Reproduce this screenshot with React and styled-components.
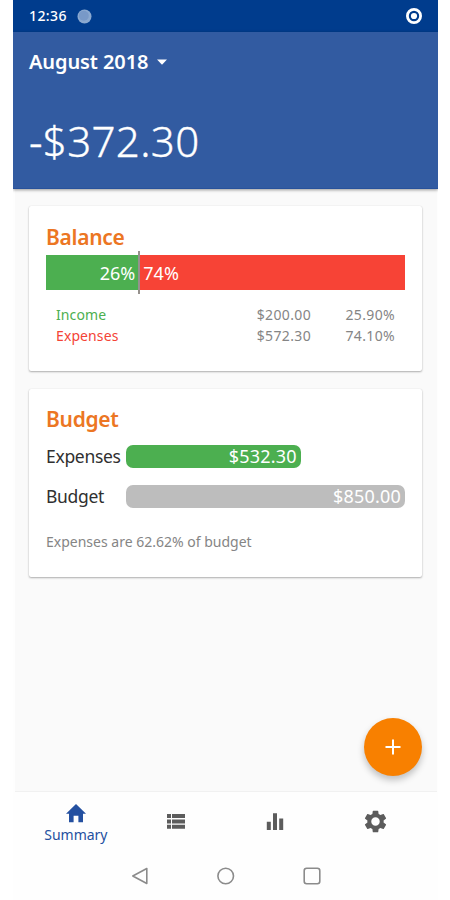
import React from "react";
import styled, { createGlobalStyle } from "styled-components";

const GlobalStyle = createGlobalStyle`
  * { box-sizing: border-box; }
  body { margin: 0; background: #fff; font-family: "Noto Sans", "Open Sans", sans-serif; }
`;

const Screen = styled.div`
  position: relative;
  width: 425px;
  height: 900px;
  margin-left: 13px;
  display: flex;
  flex-direction: column;
  overflow: hidden;
  background: #fefefe;
`;

const StatusBar = styled.div`
  flex: none;
  height: 32px;
  padding: 0 15px 0 16px;
  display: flex;
  align-items: center;
  background: #003c8d;
`;

const Clock = styled.span`
  width: 48px;
  color: #fff;
  font-size: 14px;
  font-weight: 500;
  line-height: 32px;
  letter-spacing: 0.4px;
`;

const StatusTarget = styled.svg`
  margin-left: auto;
`;

const Header = styled.header`
  flex: none;
  height: 157px;
  padding: 16px 15px 0 16px;
  background: #325ba1;
  border-bottom: 1px solid #28529b;
  box-shadow: 0 1px 3px rgba(0, 0, 0, 0.4);
  color: #fff;
  z-index: 1;
`;

const MonthPicker = styled.div`
  height: 28px;
  display: flex;
  align-items: center;
  gap: 8px;
  font-size: 20px;
  font-weight: 600;
  line-height: 28px;
  letter-spacing: -0.1px;
`;

const Total = styled.div`
  margin-top: 35px;
  font-size: 42px;
  font-weight: 300;
  line-height: 60px;
  letter-spacing: 0.35px;
  -webkit-text-stroke: 0.35px #fff;
`;

const Content = styled.main`
  height: 603px;
  flex: none;
  margin: 0 1px 0 2px;
  padding: 17px 15px 0 14px;
  background: #fafafa;
  border-bottom: 1px solid #f1f1f1;
  display: flex;
  flex-direction: column;
  gap: 18px;
`;

const Card = styled.section`
  height: ${(p) => p.$height}px;
  padding: ${(p) => p.$top}px 17px 0;
  border-radius: 2px;
  background: #fff;
  box-shadow: 0 1px 2px rgba(0, 0, 0, 0.3), 0 0 1px rgba(0, 0, 0, 0.12);
`;

const CardTitle = styled.h2`
  margin: 0;
  color: #ec7623;
  font-size: 21px;
  font-weight: 600;
  line-height: 30px;
  letter-spacing: -0.3px;
`;

const SplitBar = styled.div`
  position: relative;
  height: 35px;
  margin-top: 3px;
  display: flex;
  color: #fff;
  font-size: 18px;
  line-height: 36px;
`;

const Share = styled.div`
  width: ${(p) => p.$width};
  padding: 0 4px;
  background: ${(p) => p.$color};
  text-align: ${(p) => p.$align};
`;

const Divider = styled.div`
  position: absolute;
  left: 92px;
  top: -4px;
  width: 1.5px;
  height: 43px;
  background: #96918d;
`;

const Table = styled.div`
  margin: 15px 10px 0;
  display: grid;
  grid-template-columns: 1fr 84px 84px;
  font-size: 14px;
  line-height: 20.5px;
  color: #858585;
`;

const Label = styled.span`
  color: ${(p) => p.$color};
  letter-spacing: 0.1px;
`;

const Figure = styled.span`
  text-align: right;
  letter-spacing: 0.35px;
`;

const BudgetRow = styled.div`
  height: 24px;
  margin-top: ${(p) => p.$top}px;
  display: grid;
  grid-template-columns: 80px 1fr;
  align-items: start;
  color: #303030;
  font-size: 17.5px;
`;

const BudgetLabel = styled.span`
  line-height: 22px;
  letter-spacing: -0.3px;
`;

const BudgetBar = styled.div`
  width: ${(p) => p.$width};
  height: 23px;
  padding-right: 4px;
  border-radius: 7px;
  background: ${(p) => p.$color};
  color: #fff;
  font-size: 18px;
  line-height: 23px;
  text-align: right;
  letter-spacing: 0.2px;
`;

const Note = styled.p`
  margin: 22px 0 0;
  color: #858585;
  font-size: 14px;
  line-height: 22px;
`;

const AddButton = styled.button`
  position: absolute;
  left: 351px;
  top: 718px;
  width: 58px;
  height: 58px;
  padding: 0;
  border: 0;
  border-radius: 50%;
  display: grid;
  place-items: center;
  background: #f88000;
  box-shadow: 0 4px 7px rgba(0, 0, 0, 0.24);
`;

const Tabs = styled.nav`
  height: 58px;
  flex: none;
  padding: 0 13px;
  display: grid;
  grid-template-columns: repeat(4, 1fr);
`;

const Tab = styled.div`
  display: flex;
  flex-direction: column;
  align-items: center;
  padding-top: ${(p) => (p.$active ? 9 : 17)}px;
  color: ${(p) => (p.$active ? "#2450a0" : "#5c5c5c")};
  font-size: 14px;
  line-height: 20px;
`;

const SystemNav = styled.div`
  height: 50px;
  padding-top: 1px;
  display: flex;
  justify-content: center;
  align-items: center;
  gap: 62px;
`;

const HomeIcon = () => (
  <svg width="24" height="24" viewBox="0 0 24 24" fill="currentColor">
    <path d="M5 21.2v-8.4H2L12 3l10 9.8h-3v8.4h-4.6v-6.4H9.6v6.4z" />
  </svg>
);

const ListIcon = () => (
  <svg width="24" height="24" viewBox="0 0 24 24" fill="currentColor">
    <path d="M3 5h4v4H3zM8 5h13v4H8zM3 10.4h4v4H3zM8 10.4h13v4H8zM3 15.8h4v4H3zM8 15.8h13v4H8z" />
  </svg>
);

const ChartIcon = () => (
  <svg width="24" height="24" viewBox="0 0 24 24" fill="currentColor">
    <path d="M10 21h4V4.2h-4zM3.8 21h4v-8.3h-4zM16.2 9.5V21h4V9.5z" />
  </svg>
);

const GearIcon = () => (
  <svg width="25" height="25" viewBox="0.5 0.5 23 23" fill="currentColor">
    <path d="M19.43 12.98c.04-.32.07-.64.07-.98s-.03-.66-.07-.98l2.11-1.65c.19-.15.24-.42.12-.64l-2-3.46c-.12-.22-.39-.3-.61-.22l-2.49 1c-.52-.4-1.08-.73-1.69-.98l-.38-2.65C14.46 2.18 14.25 2 14 2h-4c-.25 0-.46.18-.49.42l-.38 2.65c-.61.25-1.17.59-1.69.98l-2.49-1c-.23-.09-.49 0-.61.22l-2 3.46c-.13.22-.07.49.12.64l2.11 1.65c-.04.32-.07.65-.07.98s.03.66.07.98l-2.11 1.65c-.19.15-.24.42-.12.64l2 3.46c.12.22.39.3.61.22l2.49-1c.52.4 1.08.73 1.69.98l.38 2.65c.03.24.24.42.49.42h4c.25 0 .46-.18.49-.42l.38-2.65c.61-.25 1.17-.59 1.69-.98l2.49 1c.23.09.49 0 .61-.22l2-3.46c.12-.22.07-.49-.12-.64zM12 15.9A3.9 3.9 0 1 1 12 8.1a3.9 3.9 0 0 1 0 7.8z" />
  </svg>
);

export default function App() {
  return (
    <>
      <GlobalStyle />
      <Screen>
        <StatusBar>
          <Clock>12:36</Clock>
          <svg width="15" height="15" viewBox="0 0 15 15">
            <circle cx="7.5" cy="7.5" r="7" fill="#8ba9d0" />
            <circle cx="6.8" cy="6.8" r="5" fill="#7899c8" />
          </svg>
          <StatusTarget width="18" height="18" viewBox="0 0 18 18">
            <circle cx="9" cy="9" r="6.6" fill="none" stroke="#fff" strokeWidth="2.8" />
            <circle cx="9" cy="9" r="3.1" fill="#fff" />
          </StatusTarget>
        </StatusBar>
        <Header>
          <MonthPicker>
            August 2018
            <svg width="12" height="6" viewBox="0 0 12 6">
              <path d="M1 .5h10L6 5.8z" fill="#fff" />
            </svg>
          </MonthPicker>
          <Total>-$372.30</Total>
        </Header>
        <Content>
          <Card $height={165} $top={16}>
            <CardTitle>Balance</CardTitle>
            <SplitBar>
              <Share $width="26%" $color="#4caf50" $align="right">26%</Share>
              <Share $width="74%" $color="#f74336" $align="left">74%</Share>
              <Divider />
            </SplitBar>
            <Table>
              <Label $color="#4caf50">Income</Label>
              <Figure>$200.00</Figure>
              <Figure>25.90%</Figure>
              <Label $color="#f44336">Expenses</Label>
              <Figure>$572.30</Figure>
              <Figure>74.10%</Figure>
            </Table>
          </Card>
          <Card $height={188} $top={15}>
            <CardTitle>Budget</CardTitle>
            <BudgetRow $top={11}>
              <BudgetLabel>Expenses</BudgetLabel>
              <BudgetBar $width="62.62%" $color="#4caf50">$532.30</BudgetBar>
            </BudgetRow>
            <BudgetRow $top={16}>
              <BudgetLabel>Budget</BudgetLabel>
              <BudgetBar $width="100%" $color="#bdbdbd">$850.00</BudgetBar>
            </BudgetRow>
            <Note>Expenses are 62.62% of budget</Note>
          </Card>
        </Content>
        <Tabs>
          <Tab $active><HomeIcon />Summary</Tab>
          <Tab><ListIcon /></Tab>
          <Tab><ChartIcon /></Tab>
          <Tab><GearIcon /></Tab>
        </Tabs>
        <SystemNav>
          <svg width="24" height="24" viewBox="0 0 24 24" fill="none" stroke="#8b8b8b" strokeWidth="1.6" strokeLinejoin="round">
            <path d="M4.8 12 18.8 4.5v15z" />
          </svg>
          <svg width="24" height="24" viewBox="0 0 24 24" fill="none" stroke="#8b8b8b" strokeWidth="1.6">
            <circle cx="11.7" cy="12" r="7.8" />
          </svg>
          <svg width="24" height="24" viewBox="0 0 24 24" fill="none" stroke="#8b8b8b" strokeWidth="1.6">
            <rect x="4.2" y="4.2" width="15.6" height="15.6" rx="2.5" />
          </svg>
        </SystemNav>
        <AddButton aria-label="Add">
          <svg width="16" height="16" viewBox="0 0 16 16" stroke="#fff" strokeWidth="2">
            <path d="M8 .5v15M.5 8h15" />
          </svg>
        </AddButton>
      </Screen>
    </>
  );
}
